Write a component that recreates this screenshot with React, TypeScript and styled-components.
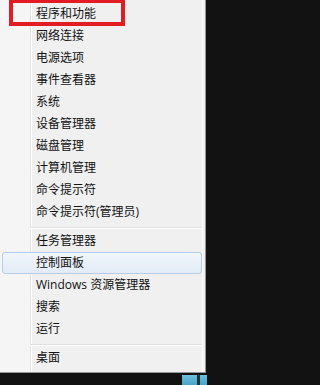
import styled, { createGlobalStyle } from "styled-components";

const GlobalStyle = createGlobalStyle`
  html, body {
    margin: 0;
    padding: 0;
    background: #121212;
  }
`;

type Item = { label: string; hover?: boolean } | "sep";

const items: Item[] = [
  { label: "程序和功能" },
  { label: "网络连接" },
  { label: "电源选项" },
  { label: "事件查看器" },
  { label: "系统" },
  { label: "设备管理器" },
  { label: "磁盘管理" },
  { label: "计算机管理" },
  { label: "命令提示符" },
  { label: "命令提示符(管理员)" },
  "sep",
  { label: "任务管理器" },
  { label: "控制面板", hover: true },
  { label: "Windows 资源管理器" },
  { label: "搜索" },
  { label: "运行" },
  "sep",
  { label: "桌面" },
];

const App: React.FC = () => {
  return (
    <Screen>
      <GlobalStyle />
      <Menu>
        {items.map((item, i) =>
          item === "sep" ? (
            <Separator key={i} />
          ) : (
            <MenuItem key={i} $hover={item.hover}>
              {item.label}
            </MenuItem>
          )
        )}
        {/* 注釈の赤枠 */}
        <RedMark />
      </Menu>
      <Taskbar>
        <TaskButton $w={15} />
        <TaskGap />
        <TaskButton $w={7} />
      </Taskbar>
    </Screen>
  );
};

export default App;

const Screen = styled.div`
  width: 207px;
  height: 385px;
  display: flex;
  flex-direction: column;
  overflow: hidden;
  background: #121212;
`;

const Menu = styled.div`
  position: relative;
  box-sizing: border-box;
  width: 206px;
  height: 373px;
  padding: 3px 3px 3px 0;
  display: flex;
  flex-direction: column;
  background: linear-gradient(
    to right,
    #f5f5f5 0 30px,
    #e2e3e3 30px 31px,
    #ffffff 31px 32px,
    #f0f0f0 32px
  );
  border-right: 1px solid #979797;
  border-bottom: 1px solid #979797;
  box-shadow: inset -2px 0 #f0f0f0, inset -3px 0 #fcfcfc;
  font-family: "Open Sans", "Noto Sans CJK SC", sans-serif;
  font-size: 12px;
  color: #111;
`;

const MenuItem = styled.div<{ $hover?: boolean }>`
  box-sizing: border-box;
  height: 22px;
  line-height: 20px;
  padding-left: 33px;
  margin-left: 2px;
  border: 1px solid ${(p) => (p.$hover ? "#b4cde8" : "transparent")};
  border-radius: 3px;
  background: ${(p) =>
    p.$hover ? "linear-gradient(#f2f6fb, #e2ebf6)" : "transparent"};
  white-space: nowrap;
`;

const Separator = styled.div`
  height: 7px;
  margin-left: 30px;
  position: relative;

  &::before {
    content: "";
    position: absolute;
    left: 0;
    right: 0;
    top: 4px;
    border-top: 1px solid #e0e0e0;
    border-bottom: 1px solid #ffffff;
  }
`;

const RedMark = styled.div`
  position: absolute;
  left: 9px;
  top: 0;
  width: 116px;
  height: 26px;
  box-sizing: border-box;
  border: 4px solid #e31b23;
  border-top-width: 3px;
`;

const Taskbar = styled.div`
  flex: 1;
  display: flex;
  justify-content: flex-end;
  align-items: flex-end;
  background: #121212;
`;

const TaskButton = styled.div<{ $w: number }>`
  width: ${(p) => p.$w}px;
  height: 10px;
  background: linear-gradient(#6cc0dc, #4aa3c8);
`;

const TaskGap = styled.div`
  width: 3px;
  height: 10px;
  background: #1d3440;
`;
